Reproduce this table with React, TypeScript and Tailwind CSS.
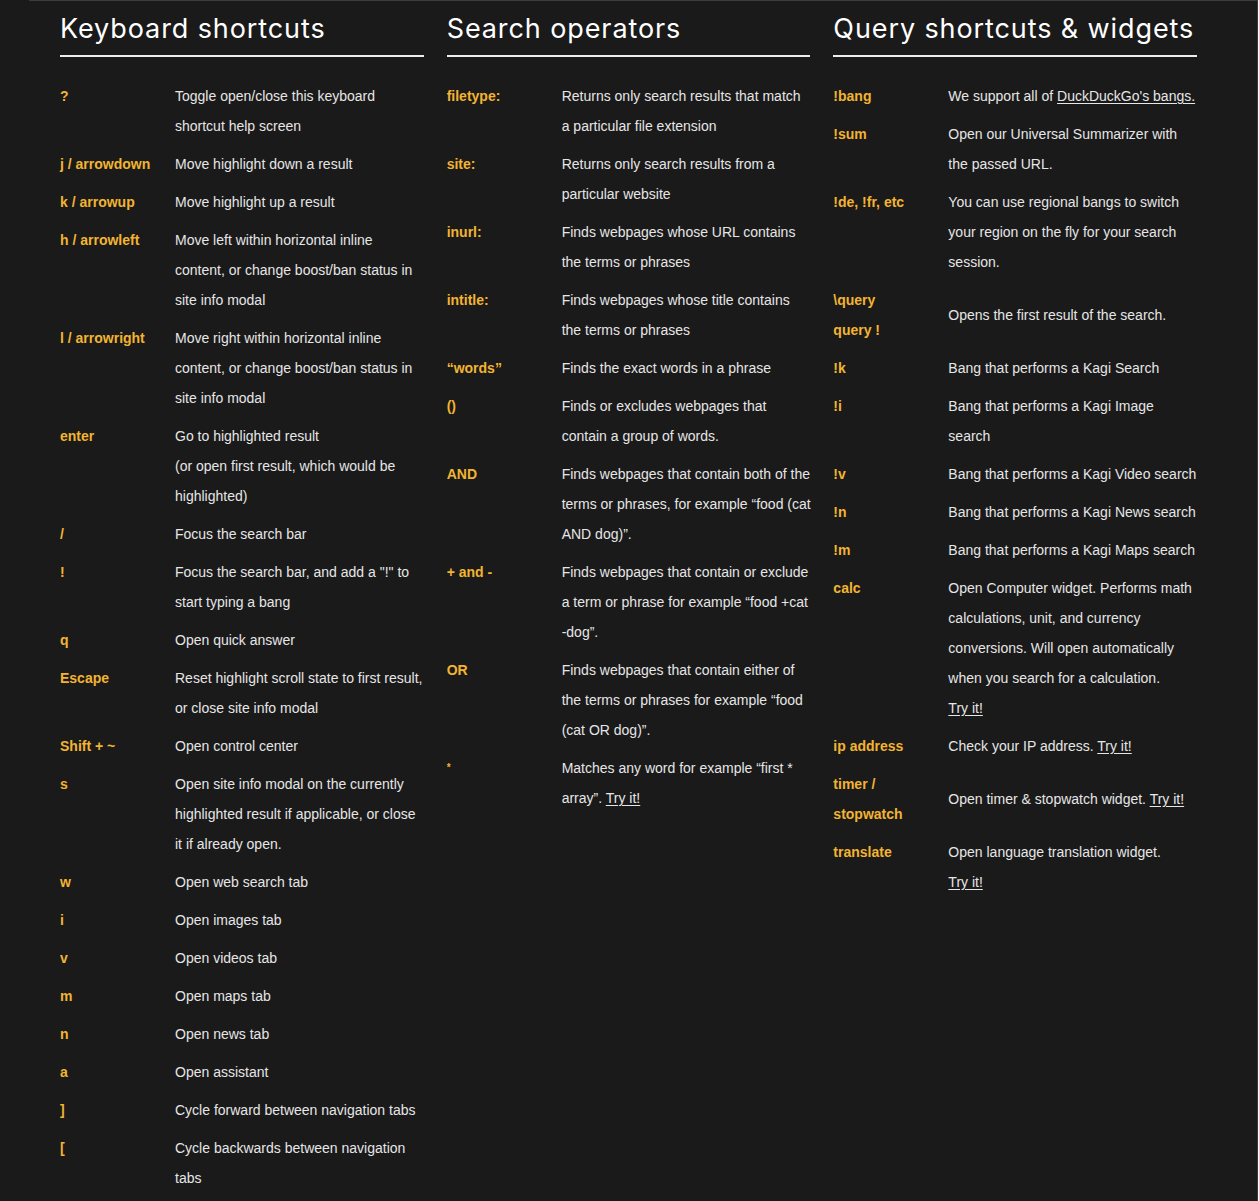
import type { ReactNode } from "react";

type Row = { k: ReactNode; d: ReactNode; center?: boolean; wide?: boolean };

const TryIt = () => <a className="whitespace-nowrap underline underline-offset-2">Try it!</a>;

const keyboard: Row[] = [
  { k: "?", d: "Toggle open/close this keyboard shortcut help screen" },
  { k: "j / arrowdown", d: "Move highlight down a result" },
  { k: "k / arrowup", d: "Move highlight up a result" },
  { k: "h / arrowleft", d: "Move left within horizontal inline content, or change boost/ban status in site info modal" },
  { k: "l / arrowright", d: "Move right within horizontal inline content, or change boost/ban status in site info modal" },
  {
    k: "enter",
    d: (
      <>
        Go to highlighted result
        <br />
        (or open first result, which would be highlighted)
      </>
    ),
  },
  { k: "/", d: "Focus the search bar" },
  { k: "!", d: 'Focus the search bar, and add a "!" to start typing a bang' },
  { k: "q", d: "Open quick answer" },
  { k: "Escape", d: "Reset highlight scroll state to first result, or close site info modal" },
  { k: "Shift + ~", d: "Open control center" },
  { k: "s", d: "Open site info modal on the currently highlighted result if applicable, or close it if already open." },
  { k: "w", d: "Open web search tab" },
  { k: "i", d: "Open images tab" },
  { k: "v", d: "Open videos tab" },
  { k: "m", d: "Open maps tab" },
  { k: "n", d: "Open news tab" },
  { k: "a", d: "Open assistant" },
  { k: "]", d: "Cycle forward between navigation tabs" },
  { k: "[", d: "Cycle backwards between navigation tabs" },
];

const operators: Row[] = [
  { k: "filetype:", d: "Returns only search results that match a particular file extension" },
  { k: "site:", d: "Returns only search results from a particular website" },
  { k: "inurl:", d: "Finds webpages whose URL contains the terms or phrases" },
  { k: "intitle:", d: "Finds webpages whose title contains the terms or phrases" },
  { k: "“words”", d: "Finds the exact words in a phrase" },
  { k: "()", d: "Finds or excludes webpages that contain a group of words." },
  {
    k: "AND",
    d: "Finds webpages that contain both of the terms or phrases, for example “food (cat AND dog)”.",
    wide: true,
  },
  { k: "+ and -", d: "Finds webpages that contain or exclude a term or phrase for example “food +cat -dog”." },
  { k: "OR", d: "Finds webpages that contain either of the terms or phrases for example “food (cat OR dog)”." },
  {
    k: <span className="align-top text-[10px]">*</span>,
    d: (
      <>
        Matches any word for example “first * array”. <TryIt />
      </>
    ),
  },
];

const query: Row[] = [
  {
    k: "!bang",
    d: (
      <>
        We support all of <a className="underline underline-offset-2">DuckDuckGo's bangs.</a>
      </>
    ),
  },
  { k: "!sum", d: "Open our Universal Summarizer with the passed URL." },
  { k: "!de, !fr, etc", d: "You can use regional bangs to switch your region on the fly for your search session." },
  {
    k: (
      <>
        \query
        <br />
        query !
      </>
    ),
    d: "Opens the first result of the search.",
    center: true,
  },
  { k: "!k", d: "Bang that performs a Kagi Search" },
  { k: "!i", d: "Bang that performs a Kagi Image search" },
  { k: "!v", d: "Bang that performs a Kagi Video search" },
  { k: "!n", d: "Bang that performs a Kagi News search" },
  { k: "!m", d: "Bang that performs a Kagi Maps search" },
  {
    k: "calc",
    d: (
      <>
        Open Computer widget. Performs math calculations, unit, and currency conversions. Will open automatically
        when you search for a calculation. <TryIt />
      </>
    ),
  },
  {
    k: "ip address",
    d: (
      <>
        Check your IP address. <TryIt />
      </>
    ),
  },
  {
    k: (
      <>
        timer /
        <br />
        stopwatch
      </>
    ),
    d: (
      <>
        Open timer &amp; stopwatch widget. <TryIt />
      </>
    ),
    center: true,
  },
  {
    k: "translate",
    d: (
      <>
        Open language translation widget. <TryIt />
      </>
    ),
  },
];

function Section({ title, rows }: { title: string; rows: Row[] }) {
  return (
    <section className="w-[364px]">
      <h2
        className="border-b-2 border-[#ececec] pt-[10px] pb-[8px] text-[27px] leading-[36px] font-normal tracking-[0.9px] text-white"
        style={{ fontFamily: "Inter, 'Open Sans', sans-serif" }}
      >
        {title}
      </h2>
      <dl className="mt-[24px] flex flex-col gap-2">
        {rows.map((r, i) => (
          <div key={i} className={`flex ${r.center ? "items-center" : "items-start"}`}>
            <dt className="w-[115px] shrink-0 font-bold text-[#f2b431]">{r.k}</dt>
            <dd className={`min-w-0 flex-1 text-[#e6e6e6] ${r.wide ? "-mr-[8px]" : ""}`}>{r.d}</dd>
          </div>
        ))}
      </dl>
    </section>
  );
}

export default function App() {
  return (
    <div className="min-h-[1201px] w-[1258px] border-r border-[#3a3a3a] bg-[#1a1a1a]">
      <div className="ml-[29px] h-px bg-[#3c3c3c]" />
      <div
        className="flex gap-[23px] px-[60px] text-[14px] leading-[30px]"
        style={{ fontFamily: "'Liberation Sans', Arial, sans-serif" }}
      >
        <Section title="Keyboard shortcuts" rows={keyboard} />
        <Section title="Search operators" rows={operators} />
        <Section title="Query shortcuts & widgets" rows={query} />
      </div>
    </div>
  );
}
